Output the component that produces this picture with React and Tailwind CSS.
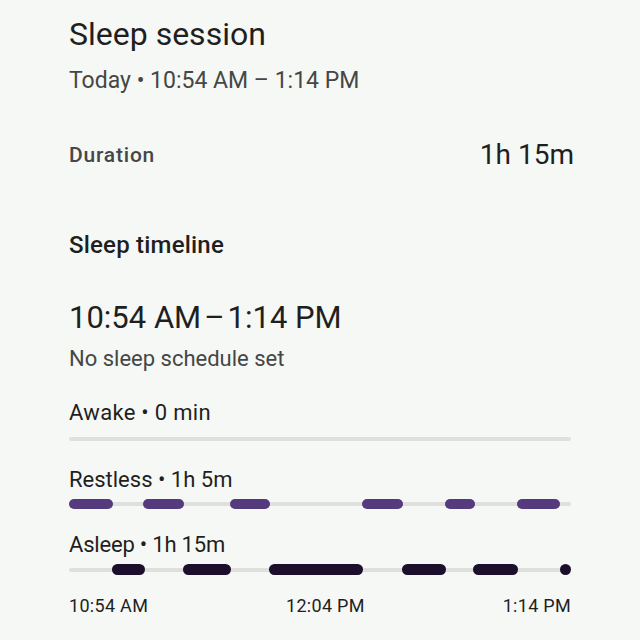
import React from 'react';

const restless = [
  [0, 8.7], [14.8, 22.9], [32.1, 40.0], [58.4, 66.5], [74.9, 80.8], [89.2, 97.9],
];
const asleep = [
  [8.5, 15.1], [22.8, 32.2], [39.9, 58.6], [66.4, 75.1], [80.5, 89.4], [97.8, 100],
];

const Track = ({ segments, color, height }) => (
  <div className={`relative w-full flex items-center ${height}`}>
    <div className="w-full h-[4px] rounded-full bg-[#dfe0dd]" />
    {segments.map(([a, b], i) => (
      <div
        key={i}
        className={`absolute top-0 bottom-0 rounded-full ${color}`}
        style={{ left: `${a}%`, width: `${b - a}%` }}
      />
    ))}
  </div>
);

const App = () => {
  return (
    <div
      className="w-[640px] h-[640px] overflow-hidden bg-[#f6f8f5] pl-[69px] pr-[69px] pt-[14px] text-[#1f1f1f]"
      style={{ fontFamily: 'Roboto, "Noto Sans", sans-serif' }}
    >
      <h1 className="text-[32px] leading-[40px]">Sleep session</h1>
      <p className="mt-[13px] text-[23px] leading-[28px] text-[#444746]">Today • 10:54 AM – 1:14 PM</p>

      <div className="mt-[42px] flex items-center justify-between h-[36px]">
        <span className="text-[21px] leading-[24px] font-medium tracking-[0.8px] text-[#444746]">Duration</span>
        <span className="text-[28px] leading-[36px] -mr-[3px]">1h 15m</span>
      </div>

      <h2 className="mt-[58px] text-[24px] leading-[28px] font-medium tracking-[0.2px]">Sleep timeline</h2>

      <p className="mt-[39px] text-[31px] leading-[40px]">
        10:54 AM<span className="mx-[3px]">–</span>1:14 PM
      </p>
      <p className="mt-[7px] text-[22px] leading-[28px] text-[#444746]">No sleep schedule set</p>

      <div className="mt-[26px] text-[22px] leading-[28px] tracking-[0.3px]">Awake • 0 min</div>
      <div className="mt-[10px] w-full h-[4px] rounded-full bg-[#dfe0dd]" />

      <div className="mt-[25px] text-[22px] leading-[28px]">Restless • 1h 5m</div>
      <div className="mt-[5px]">
        <Track segments={restless} color="bg-[#553b7e]" height="h-[10px]" />
      </div>

      <div className="mt-[22px] text-[22px] leading-[28px] -tracking-[0.2px]">Asleep • 1h 15m</div>
      <div className="mt-[5px]">
        <Track segments={asleep} color="bg-[#1b0f2c]" height="h-[11px]" />
      </div>

      <div className="mt-[19px] flex justify-between text-[18px] leading-[24px] tracking-[0.3px]">
        <span>10:54 AM</span>
        <span>12:04 PM</span>
        <span>1:14 PM</span>
      </div>
    </div>
  );
};

export default App;
